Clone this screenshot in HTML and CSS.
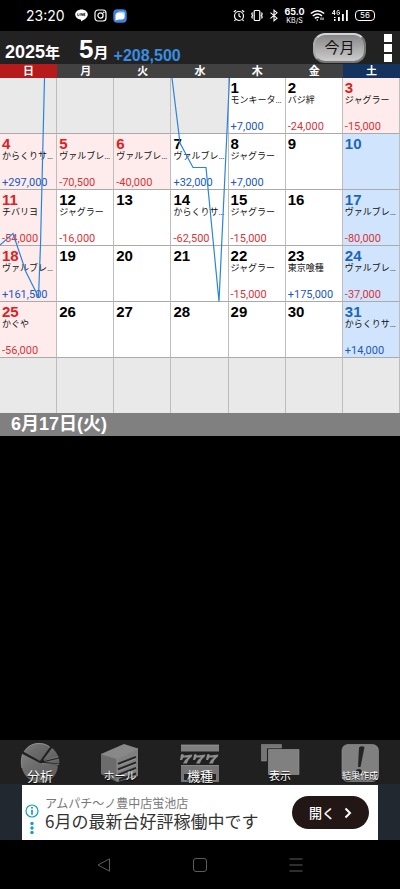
FILE: index.html
```html
<!DOCTYPE html>
<html lang="ja">
<head>
<meta charset="utf-8">
<meta name="viewport" content="width=device-width, initial-scale=1">
<title>2025年5月</title>
<link rel="stylesheet" href="styles.css">
</head>
<body>
<div class="status">
  <div class="status-side">
    <span class="clock">23:20</span>
    <svg width="13" height="13" viewBox="0 0 13 13"><path d="M6.500 0.500C3 .5.200 2.700.200 5.600c0 2.600 2.200 4.600 5.200 5 .8.100.7.700.6 1.900 2.800-1.400 6.800-3.600 6.800-6.900C12.800 2.700 10 .5 6.500.500z" fill="#fff"/><path d="M2.800 4.300v2.400h1.300M5 4.300v2.400M6.200 6.700V4.300l1.500 2.400V4.300M10.300 4.300H8.800v2.400h1.500M8.800 5.500h1.300" stroke="#000" stroke-width=".7" fill="none"/></svg>
    <svg width="13" height="13" viewBox="0 0 13 13" fill="none" stroke="#fff" stroke-width="1.200"><rect x="1" y="1" width="11" height="11" rx="3"/><circle cx="6.500" cy="6.500" r="2.600"/><circle cx="9.700" cy="3.300" r=".3"/></svg>
    <svg width="14" height="14" viewBox="0 0 14 14"><rect x=".3" y=".3" width="13.400" height="13.400" rx="4" fill="#3f82d8"/><rect x="4" y="2.500" width="8" height="7.500" rx="2.200" fill="#a9cdf6"/><path d="M4.500 4h4.500a2 2 0 0 1 2 2v2.500a2 2 0 0 1-2 2H6L2.500 11.500V6a2 2 0 0 1 2-2z" fill="#fff"/></svg>
  </div>
  <div class="status-side">
    <svg width="12" height="13" viewBox="0 0 12 13" fill="none" stroke="#fff" stroke-width="1.200"><circle cx="6" cy="7" r="4.500"/><path d="M6 4.300V7l1.800 1.200M.8 3 3 1.200M11.200 3 9 1.200M2.600 10.500l-1.200 1.500M9.400 10.500l1.200 1.500"/></svg>
    <svg width="12" height="13" viewBox="0 0 12 13" fill="none" stroke="#fff" stroke-width="1.200"><rect x="3.200" y="1.500" width="5.600" height="10" rx="1"/><path d="M1.500 3.500 .8 5l.8 1.500L.8 8l.7 1.500M10.500 3.500l.7 1.500-.8 1.500.8 1.500-.7 1.500"/></svg>
    <svg width="10" height="13" viewBox="0 0 10 13" fill="none" stroke="#fff" stroke-width="1.100"><path d="M1.500 3.700 8 9.200 5 11.800V1.200L8 3.800 1.500 9.300"/></svg>
    <span class="speed"><b>65.0</b><span>KB/S</span></span>
    <svg width="15" height="13" viewBox="0 0 15 13" fill="none" stroke="#fff" stroke-width="1.500"><path d="M.8 4.500Q7.500-1 14.200 4.500M2.800 7Q7.500 3.200 12 6.800M4.800 9.400Q7.500 7.500 9 8.800"/><circle cx="7.300" cy="11" r=".8" fill="#fff" stroke="none"/><path d="M11 11V8.500M13 11V8.500" stroke-width="1"/></svg>
    <svg width="18" height="13" viewBox="0 0 18 13"><path d="M3.500 1 1.200 4.500h3.100M3.500 1v5M8.500 2Q6 .2 6 3.500T8.500 5V3.500H7.300" fill="none" stroke="#fff" stroke-width=".9"/><path d="M3 8h1.500v1H3zM3 10h1.500v2H3zM7 8h1.800v4H7zM11 5h1.800v7H11zM15 1h1.800v11H15z" fill="#fff"/></svg>
    <span class="battery">56</span>
  </div>
</div>

<header class="header">
  <h1 class="title"><span>2025<span class="kanji">年</span></span><span class="month">5<span class="kanji">月</span></span></h1>
  <span class="total">+208,500</span>
  <button class="today" type="button">今月</button>
  <button class="more" type="button" aria-label="メニュー"><i></i><i></i><i></i></button>
</header>

<main class="main">
  <div class="calendar">
    <table>
      <thead><tr><th class="sunday">日</th><th>月</th><th>火</th><th>水</th><th>木</th><th>金</th><th class="saturday">土</th></tr></thead>
      <tbody>
        <tr>
          <td class="out"></td><td class="out"></td><td class="out"></td><td class="out"></td>
          <td><b>1</b><p>モンキータ…</p><span class="plus">+7,000</span></td>
          <td><b>2</b><p>バジ絆</p><span class="minus">-24,000</span></td>
          <td class="holiday"><b>3</b><p>ジャグラー</p><span class="minus">-15,000</span></td>
        </tr>
        <tr>
          <td class="holiday"><b>4</b><p>からくりサ…</p><span class="plus">+297,000</span></td>
          <td class="holiday"><b>5</b><p>ヴァルブレ…</p><span class="minus">-70,500</span></td>
          <td class="holiday"><b>6</b><p>ヴァルブレ…</p><span class="minus">-40,000</span></td>
          <td><b>7</b><p>ヴァルブレ…</p><span class="plus">+32,000</span></td>
          <td><b>8</b><p>ジャグラー</p><span class="plus">+7,000</span></td>
          <td><b>9</b></td>
          <td class="sat"><b>10</b></td>
        </tr>
        <tr>
          <td class="holiday"><b>11</b><p>チバリヨ</p><span class="minus">-54,000</span></td>
          <td><b>12</b><p>ジャグラー</p><span class="minus">-16,000</span></td>
          <td><b>13</b></td>
          <td><b>14</b><p>からくりサ…</p><span class="minus">-62,500</span></td>
          <td><b>15</b><p>ジャグラー</p><span class="minus">-15,000</span></td>
          <td><b>16</b></td>
          <td class="sat"><b>17</b><p>ヴァルブレ…</p><span class="minus">-80,000</span></td>
        </tr>
        <tr>
          <td class="holiday"><b>18</b><p>ヴァルブレ…</p><span class="plus">+161,500</span></td>
          <td><b>19</b></td><td><b>20</b></td><td><b>21</b></td>
          <td><b>22</b><p>ジャグラー</p><span class="minus">-15,000</span></td>
          <td><b>23</b><p>東京喰種</p><span class="plus">+175,000</span></td>
          <td class="sat"><b>24</b><p>ヴァルブレ…</p><span class="minus">-37,000</span></td>
        </tr>
        <tr>
          <td class="holiday"><b>25</b><p>かぐや</p><span class="minus">-56,000</span></td>
          <td><b>26</b></td><td><b>27</b></td><td><b>28</b></td><td><b>29</b></td><td><b>30</b></td>
          <td class="sat"><b>31</b><p>からくりサ…</p><span class="plus">+14,000</span></td>
        </tr>
        <tr><td class="out"></td><td class="out"></td><td class="out"></td><td class="out"></td><td class="out"></td><td class="out"></td><td class="out"></td></tr>
      </tbody>
    </table>
    <svg class="chart" viewBox="0 0 400 335" preserveAspectRatio="none" aria-hidden="true"><path d="M0 167 13 155.500 26 194 38.500 219 40.500 167 44.500 0M172 0 180 65 193 89.500H206L219 223.500 229.500 0"/></svg>
  </div>
  <h2 class="selected">6月17日(火)</h2>
</main>

<nav class="tools">
  <a href="#analysis" class="tool large">
    <svg width="40" height="40" viewBox="0 0 40 40"><g fill="url(#metal)"><path d="M20 18 4 9C8 2 14 0 19 0c5 0 8 1.500 11 4z"/><path d="M23 17 32 5Q36 8 38.500 14z"/><path d="M24 19 39 15.500 39.500 20.500z"/><path d="M20 20 2.500 11C-2 24 5 39 19 39.500c11 0 18-6 19-17z"/></g><path d="M4 9C8 2 14 .5 19 .5c5 0 8 1.500 11 4M24 17.500 38.500 14M22 20.500 39 21.500M2.500 11C1 16 1 21 2 25" fill="none" stroke="#a8a8a8" stroke-width=".6"/></svg>
    <span>分析</span></a>
  <a href="#hall" class="tool">
    <svg width="40" height="40" viewBox="0 0 40 40"><path d="M1 11 24 1 38 5.500 17 16z" fill="#888"/><path d="M1 11 17 16V39L1 31z" fill="#6c6c6c"/><path d="M17 16 38 5.500V33L17 39z" fill="#808080"/><path d="M1 11 17 16 38 5.500M17 16V38" fill="none" stroke="#a0a0a0" stroke-width=".5"/><path d="M18 21 36 14M18 26.500 36 19.500M18 32 36 25M19 37 36 30.500" stroke="#252525" stroke-width="2"/><path d="M18 22.500 36 15.500M18 28 36 21M18 33.500 36 26.500" stroke="#a2a2a2" stroke-width=".7"/></svg>
    <span>ホール</span></a>
  <a href="#model" class="tool large">
    <svg width="40" height="40" viewBox="0 0 40 40"><path d="M1 2H39V8.500H1z" fill="#808080"/><path d="M1 2H39" stroke="#a0a0a0" stroke-width=".7"/><path d="M1 11.500 3 11 4 12.500 12.500 11.500 11.500 14Q8 16 7 20.500H3Q4 17 8 14.500H3.500L2 17H0zM14 11.500 16 11 17 12.500 25.500 11.500 24.500 14Q21 16 20 20.500H16Q17 17 21 14.500H16.500L15 17H13zM27 11.500 29 11 30 12.500 38.500 11.500 37.500 14Q34 16 33 20.500H29Q30 17 34 14.500H29.500L28 17H26z" fill="#8d8d8d"/><path d="M1 22.500H39V39H1z" fill="#757575"/><path d="M1 22.500H39" stroke="#a0a0a0" stroke-width=".7"/><path d="M4 31H36V37H4z" fill="#252525"/><path d="M13 31H14.500V37H13zM25 31H26.500V37H25z" fill="#757575"/></svg>
    <span>機種</span></a>
  <a href="#display" class="tool">
    <svg width="40" height="40" viewBox="0 0 40 40"><path d="M1.500 1.500H21.500V5H6.500V18H1.500z" fill="#757575" stroke="#999" stroke-width=".5"/><path d="M8.500 6.500H39V31.500H8.500z" fill="#808080" stroke="#999" stroke-width=".6"/></svg>
    <span>表示</span></a>
  <a href="#result" class="tool small">
    <svg width="40" height="40" viewBox="0 0 40 40"><rect x="2" y="1.500" width="36.500" height="37" rx="6" fill="#808080" stroke="#999" stroke-width=".6"/><path d="M19 4.500Q21.500 2.500 24.500 4L20.500 24H18z" fill="#252525"/><ellipse cx="18.800" cy="28.500" rx="3" ry="2.500" fill="#252525"/></svg>
    <span>結果作成</span></a>
  <svg class="defs" width="0" height="0" aria-hidden="true"><defs><linearGradient id="metal" x1="0" y1="0" x2="1" y2="1"><stop offset="0" stop-color="#808080"/><stop offset=".4" stop-color="#6c6c6c"/><stop offset="1" stop-color="#5c5c5c"/></linearGradient></defs></svg>
</nav>

<aside class="ad-area">
  <div class="ad">
    <svg class="ad-info" width="14" height="32" viewBox="0 0 14 32"><circle cx="7" cy="7" r="6" fill="none" stroke="#16a0b8" stroke-width="1.200"/><path d="M7 5.800V10.800" stroke="#16a0b8" stroke-width="1.700"/><g fill="#16a0b8"><circle cx="7" cy="3.700" r="1"/><circle cx="7" cy="19.500" r="1.700"/><circle cx="7" cy="24" r="1.700"/><circle cx="7" cy="28.500" r="1.700"/></g></svg>
    <div class="ad-copy"><span>アムパチ～ノ豊中店蛍池店</span><strong>6月の最新台好評稼働中です</strong></div>
    <button class="open" type="button">開く<svg width="8" height="12" viewBox="0 0 8 12"><path d="M1.500 1.500 6 6 1.500 10.500" fill="none" stroke="#fff" stroke-width="2"/></svg></button>
  </div>
</aside>

<nav class="system">
  <button type="button" aria-label="戻る"><svg width="16" height="16" viewBox="0 0 16 16"><path d="M13.500 1.800V14.200L2 8z"/></svg></button>
  <button type="button" aria-label="ホーム"><svg width="16" height="16" viewBox="0 0 16 16"><rect x="1.500" y="1.500" width="13" height="13" rx="2.500"/></svg></button>
  <button type="button" aria-label="履歴"><svg width="16" height="16" viewBox="0 0 16 16"><path d="M1.500 2H14.500M1.500 8H14.500M1.500 14H14.500"/></svg></button>
</nav>
</body>
</html>
```
FILE: styles.css
```css
* { box-sizing: border-box; }

body {
  margin: 0;
  min-height: 100vh;
  display: flex;
  flex-direction: column;
  background: #000;
  color: #fff;
  font-family: "Liberation Sans", "Noto Sans CJK JP", sans-serif;
}

button { padding: 0; border: 0; background: none; color: inherit; font: inherit; }
h1, h2, p { margin: 0; }
svg { display: block; flex: none; }

.status {
  height: 31px;
  padding: 0 25px 0 26px;
  display: flex;
  align-items: center;
  justify-content: space-between;
}
.status-side { display: flex; align-items: center; gap: 6px; }
.clock { margin-right: 4px; font: 14px Inter, sans-serif; }
.speed {
  display: flex;
  flex-direction: column;
  align-items: center;
  width: 19px;
  font: 7px/8px Inter, sans-serif;
}
.speed b { font-size: 9px; line-height: 10px; }
.battery {
  width: 20px;
  height: 11px;
  border: 1px solid #fff;
  border-radius: 4px;
  font: 8px/9px Inter, sans-serif;
  text-align: center;
}

.header {
  height: 33px;
  padding: 0 8px 0 5px;
  display: flex;
  align-items: center;
  background: #222;
}
.title {
  display: flex;
  align-items: baseline;
  gap: 19px;
  padding-top: 6px;
  font-size: 18px;
  line-height: 29px;
}
.kanji { font-size: 15px; }
.month { font-size: 26px; }
.total {
  align-self: flex-end;
  margin-left: 5px;
  color: #388ee2;
  font-size: 16px;
  font-weight: bold;
  line-height: 16px;
}
.today {
  width: 53px;
  height: 30px;
  margin-left: auto;
  border: 2px solid #777;
  border-top-color: #d4d4d4;
  border-left-color: #aaa;
  border-radius: 12px;
  background: linear-gradient(#888, #ccc);
  color: #111;
  font-size: 15px;
  line-height: 24px;
}
.more {
  margin-left: 18px;
  display: flex;
  flex-direction: column;
  gap: 2px;
}
.more i { width: 8px; height: 8px; background: #fff; }

.main { flex: 1; }
.calendar { position: relative; }
table {
  width: 100%;
  table-layout: fixed;
  border-collapse: separate;
  border-spacing: 0;
}
th {
  height: 14px;
  padding: 0;
  background: #414141;
  font-size: 11px;
  line-height: 14px;
}
.sunday { background: #b71a1a; }
.saturday { background: #14335f; }
td {
  height: 56px;
  padding: 2px 0 0 2px;
  border-right: 1px solid #bdbdbd;
  border-bottom: 1px solid #aaa;
  background: #fff;
  color: #111;
  vertical-align: top;
  white-space: nowrap;
}
td b { display: block; color: #000; font-size: 15px; line-height: 15px; }
td p { font: 9px/10px Roboto, "Noto Sans CJK JP", sans-serif; }
td span { display: block; padding-top: 15px; font: 11px/13px Roboto, sans-serif; }
tr:last-child td { height: 55px; border-bottom: 0; }
.out { background: #e9e9e9; }
.holiday { background: #feecec; }
.holiday b { color: #dd2022; }
.sat { background: #d0e5fd; }
.sat b { color: #1c66b8; }
.plus { color: #2158bd; }
.minus { color: #d8343a; }

.chart {
  position: absolute;
  left: 0;
  bottom: 0;
  width: 100%;
  height: calc(100% - 14px);
  fill: none;
  stroke: #2985dc;
  stroke-width: 1.2;
}

.selected {
  padding-left: 11px;
  background: #808080;
  font-size: 18px;
  line-height: 23px;
}

.tools {
  height: 44px;
  padding-top: 2px;
  display: flex;
  justify-content: space-around;
  align-items: center;
  background: #202020;
}
.tool {
  flex: 1;
  display: grid;
  justify-items: center;
  align-items: end;
  color: #fff;
  font-size: 11px;
  line-height: 13px;
  text-decoration: none;
  text-shadow: 0 1px 1px #000;
}
.tool > * { grid-area: 1 / 1; }
.large { font-size: 13px; }
.small { font-size: 9px; }
.defs { position: absolute; }

.ad-area { padding: 1px 22px 0; background: #222830; }
.ad {
  height: 55px;
  padding: 0 9px 0 3px;
  display: flex;
  align-items: center;
  background: #fff;
  color: #333;
}
.ad-info { margin: 14px 6px 0 0; }
.ad-copy { flex: 1; white-space: nowrap; font-family: "Noto Sans CJK JP", sans-serif; }
.ad-copy span { display: block; color: #777; font-size: 12px; line-height: 16px; }
.ad-copy strong { display: block; font-size: 17px; font-weight: normal; line-height: 20px; }
.open {
  width: 77px;
  height: 33px;
  display: flex;
  align-items: center;
  justify-content: center;
  gap: 9px;
  border-radius: 17px;
  background: #231716;
  color: #fff;
  font: 500 13px "Noto Sans CJK JP", sans-serif;
}

.system {
  height: 49px;
  padding: 0 56px;
  display: flex;
  align-items: center;
}
.system button { flex: 1; display: flex; justify-content: center; }
.system svg { fill: none; stroke: #5c5c5c; stroke-width: 1; }
```
